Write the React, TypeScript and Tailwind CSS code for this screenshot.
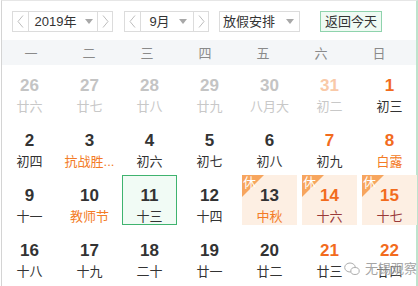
import React from 'react';

type Day = {
  n: number;
  l: string;
  faded?: boolean;
  wk?: boolean;
  lunarHi?: boolean;
  rest?: boolean;
  sel?: boolean;
};

const WEEK = ['一', '二', '三', '四', '五', '六', '日'];

const ROWS: Day[][] = [
  [
    { n: 26, l: '廿六', faded: true },
    { n: 27, l: '廿七', faded: true },
    { n: 28, l: '廿八', faded: true },
    { n: 29, l: '廿九', faded: true },
    { n: 30, l: '八月大', faded: true },
    { n: 31, l: '初二', faded: true, wk: true },
    { n: 1, l: '初三', wk: true },
  ],
  [
    { n: 2, l: '初四' },
    { n: 3, l: '抗战胜...', lunarHi: true },
    { n: 4, l: '初六' },
    { n: 5, l: '初七' },
    { n: 6, l: '初八' },
    { n: 7, l: '初九', wk: true },
    { n: 8, l: '白露', wk: true, lunarHi: true },
  ],
  [
    { n: 9, l: '十一' },
    { n: 10, l: '教师节', lunarHi: true },
    { n: 11, l: '十三', sel: true },
    { n: 12, l: '十四' },
    { n: 13, l: '中秋', rest: true, lunarHi: true },
    { n: 14, l: '十六', rest: true, wk: true },
    { n: 15, l: '十七', rest: true, wk: true },
  ],
  [
    { n: 16, l: '十八' },
    { n: 17, l: '十九' },
    { n: 18, l: '二十' },
    { n: 19, l: '廿一' },
    { n: 20, l: '廿二' },
    { n: 21, l: '廿三', wk: true },
    { n: 22, l: '廿四', wk: true },
  ],
];

const Chevron = ({ dir }: { dir: 'l' | 'r' }) => (
  <svg width="7" height="13" viewBox="0 0 7 13" fill="none">
    <polyline
      points={dir === 'l' ? '6,0.5 1,6.5 6,12.5' : '1,0.5 6,6.5 1,12.5'}
      stroke="#bdbdbd"
      strokeWidth="1"
    />
  </svg>
);

const Caret = () => (
  <svg width="8" height="5" viewBox="0 0 8 5">
    <polygon points="0,0 8,0 4,5" fill="#a8a8a8" />
  </svg>
);

const Stepper = ({ label, mid }: { label: string; mid: string }) => (
  <div className="flex h-[21px] border border-[#dcdcdc] bg-white">
    <div className="flex w-[16px] items-center justify-center border-r border-[#dcdcdc]">
      <Chevron dir="l" />
    </div>
    <div className={`flex ${mid} items-center justify-center gap-[9px] pl-[2px]`}>
      <span className="text-[13px] text-[#333]">{label}</span>
      <Caret />
    </div>
    <div className="flex w-[15px] items-center justify-center border-l border-[#dcdcdc]">
      <Chevron dir="r" />
    </div>
  </div>
);

const DayCell = ({ d }: { d: Day }) => {
  let numColor = 'text-[#333]';
  if (d.faded) numColor = d.wk ? 'text-[#f9c9a8]' : 'text-[#c4c4c4]';
  else if (d.wk) numColor = 'text-[#f26b1d]';

  let lunarColor = 'text-[#333]';
  if (d.faded) lunarColor = 'text-[#c8c8c8]';
  else if (d.lunarHi) lunarColor = 'text-[#f37b26]';
  else if (d.rest) lunarColor = 'text-[#9a3a3a]';

  const box = d.sel
    ? 'border border-[#3fb36f] bg-[#f1fbf5] pt-[10px]'
    : d.rest
      ? 'bg-[#fdefe3] pt-[11px]'
      : 'pt-[11px]';

  return (
    <div className={`relative flex h-[50px] flex-col items-center ${box}`}>
      {d.rest && (
        <>
          <svg className="absolute left-0 top-0" width="22" height="22" viewBox="0 0 22 22">
            <polygon points="0,0 22,0 0,22" fill="#f7a55e" />
          </svg>
          <span className="absolute left-[1px] top-[1px] text-[13px] leading-none text-white">休</span>
        </>
      )}
      <span
        className={`text-[17px] font-bold leading-[20px] ${numColor}`}
        style={{ fontFamily: '"Liberation Sans", Arial, sans-serif' }}
      >
        {d.n}
      </span>
      <span className={`mt-[2px] whitespace-nowrap text-[13px] leading-[17px] ${lunarColor}`}>{d.l}</span>
    </div>
  );
};

export default function App() {
  return (
    <div
      className="relative h-[286px] w-[418px] overflow-hidden bg-white"
      style={{ fontFamily: '"Liberation Sans", "Noto Sans CJK SC", sans-serif' }}
    >
      <div className="ml-px h-full border-l border-t border-r-2 border-l-[#d4d4d4] border-t-[#e6e6e6] border-r-[#bfe3cd]">
        <div className="flex items-center pl-[10px] pt-[10px]">
          <Stepper label="2019年" mid="w-[68px]" />
          <div className="ml-[11px]">
            <Stepper label="9月" mid="w-[52px]" />
          </div>
          <div className="ml-[10px] flex h-[21px] w-[81px] items-center justify-center gap-[11px] border border-[#dcdcdc] pr-[2px]">
            <span className="text-[13px] text-[#333]">放假安排</span>
            <Caret />
          </div>
          <div className="ml-[20px] flex h-[21px] w-[62px] items-center justify-center border border-[#8fd3ad] bg-[#effaf3] text-[13px] text-[#333]">
            返回今天
          </div>
        </div>

        <div className="mt-[8px] flex h-[25px] items-center bg-[#f4f6f8] pt-[2px]">
          {WEEK.map((w) => (
            <div key={w} className="w-[58px] text-center text-[13px] text-[#8a8a8a]">
              {w}
            </div>
          ))}
        </div>

        <div className="grid grid-cols-[repeat(7,55px)] gap-[5px]">
          {ROWS.flat().map((d, i) => (
            <DayCell key={i} d={d} />
          ))}
        </div>
      </div>

      <div className="absolute left-[344px] top-[259px] flex items-center gap-[5px] opacity-80">
        <svg width="16" height="14" viewBox="0 0 16 14" fill="none" stroke="#9a9a9a" strokeWidth="1">
          <ellipse cx="6" cy="5.5" rx="5.3" ry="4.5" />
          <ellipse cx="11" cy="9" rx="4.2" ry="3.5" fill="white" />
        </svg>
        <span className="text-[13px] text-[#8f8f8f]" style={{ textShadow: '0 0 2px #fff, 0 0 2px #fff' }}>
          无锡观察
        </span>
      </div>
    </div>
  );
}
